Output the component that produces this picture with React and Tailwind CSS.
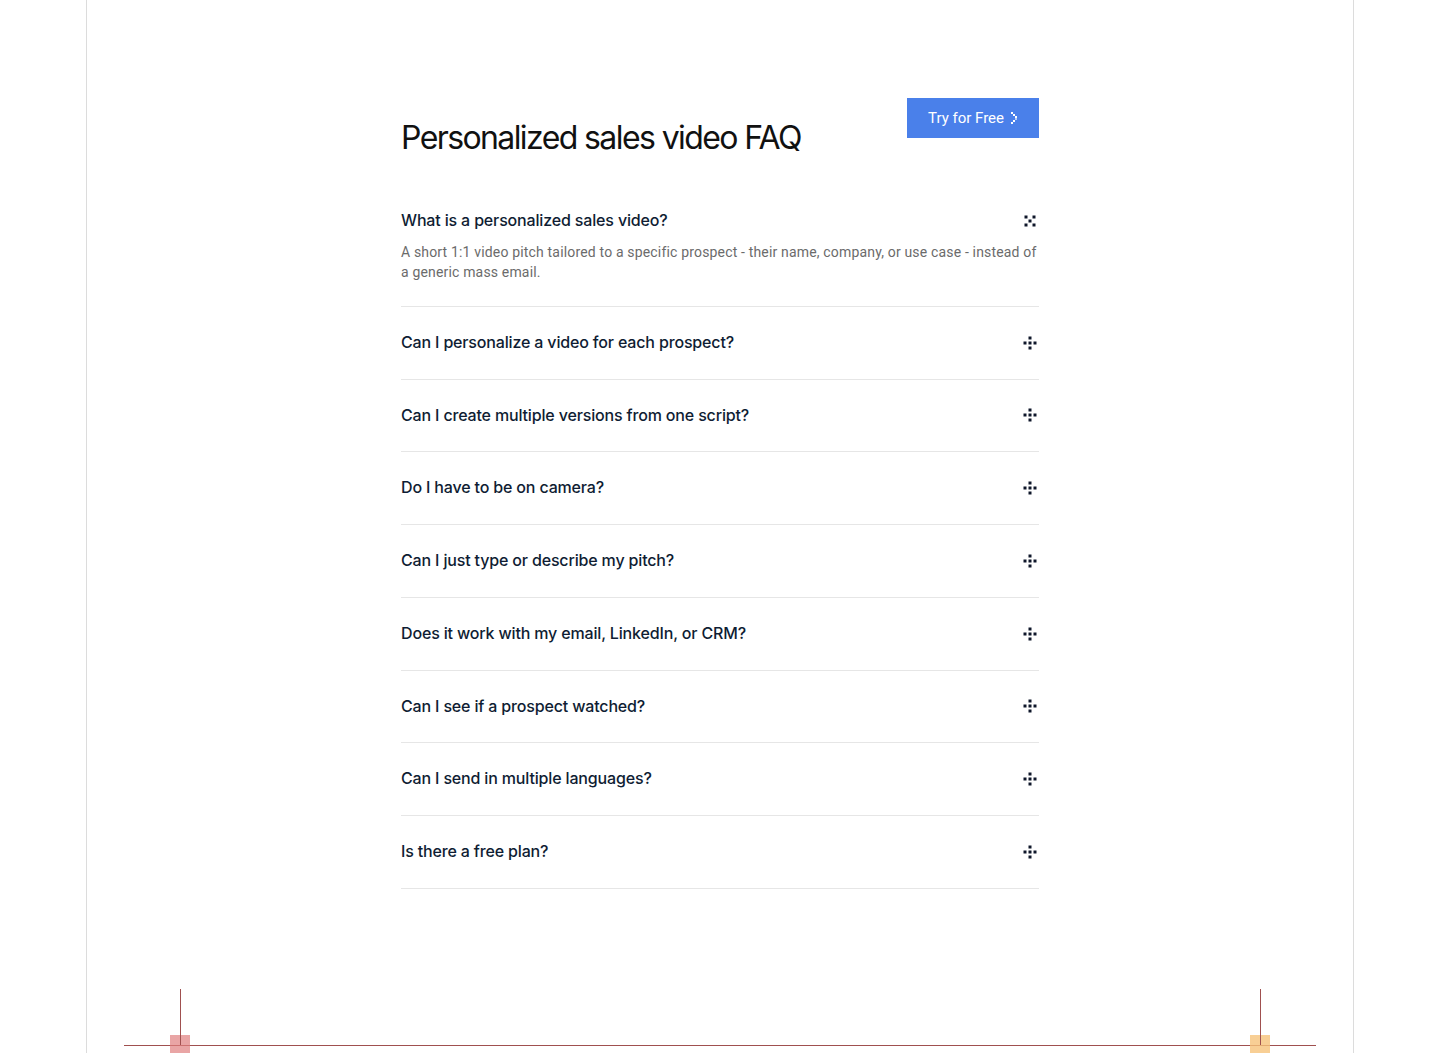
import { useState } from 'react';

const faqs = [
  {
    q: 'What is a personalized sales video?',
    a: 'A short 1:1 video pitch tailored to a specific prospect - their name, company, or use case - instead of a generic mass email.',
  },
  { q: 'Can I personalize a video for each prospect?', a: 'Yes. Swap in the name, company and details for every prospect and generate a unique video for each one.' },
  { q: 'Can I create multiple versions from one script?', a: 'Yes. Write one script and create as many variations as you need.' },
  { q: 'Do I have to be on camera?', a: 'No. You can use an AI avatar or a voiceover instead.' },
  { q: 'Can I just type or describe my pitch?', a: 'Yes. Describe your pitch and the video is generated for you.' },
  { q: 'Does it work with my email, LinkedIn, or CRM?', a: 'Yes. Share a link or embed the video wherever you reach your prospects.' },
  { q: 'Can I see if a prospect watched?', a: 'Yes. You can track views and engagement for every video.' },
  { q: 'Can I send in multiple languages?', a: 'Yes. Translate your video into many languages.' },
  { q: 'Is there a free plan?', a: 'Yes. You can try it for free.' },
];

function PlusDots() {
  return (
    <svg width="14" height="14" viewBox="0 0 14 14" className="text-[#0f172a]">
      <rect x="5.5" y="0.5" width="3" height="3" fill="currentColor" />
      <rect x="0.5" y="5.5" width="3" height="3" fill="currentColor" />
      <rect x="5.5" y="5.5" width="3" height="3" fill="currentColor" />
      <rect x="10.5" y="5.5" width="3" height="3" fill="currentColor" />
      <rect x="5.5" y="10.5" width="3" height="3" fill="currentColor" />
    </svg>
  );
}

function CrossDots() {
  return (
    <svg width="14" height="14" viewBox="0 0 14 14" className="text-[#0f172a]">
      <rect x="1.5" y="1.5" width="3" height="3" fill="currentColor" />
      <rect x="9.5" y="1.5" width="3" height="3" fill="currentColor" />
      <rect x="5.5" y="5.5" width="3" height="3" fill="currentColor" />
      <rect x="1.5" y="9.5" width="3" height="3" fill="currentColor" />
      <rect x="9.5" y="9.5" width="3" height="3" fill="currentColor" />
    </svg>
  );
}

function PixelChevron() {
  return (
    <svg width="7" height="12" viewBox="0 0 7 12">
      <rect x="0" y="0" width="2" height="2" fill="white" />
      <rect x="2" y="2" width="2" height="2" fill="white" />
      <rect x="4" y="4" width="2" height="2" fill="white" />
      <rect x="4" y="6" width="2" height="2" fill="white" opacity="0.6" />
      <rect x="2" y="8" width="2" height="2" fill="white" />
      <rect x="0" y="10" width="2" height="2" fill="white" />
    </svg>
  );
}

// decorative crosshair marker at the bottom of the frame
function Marker({ color }) {
  return (
    <div className="flex flex-col items-start w-5">
      <div className="ml-[10px] h-[46px] w-px bg-[#a0504f]" />
      <div className={`w-5 h-5 ${color}`}>
        <div className="ml-[10px] h-[10px] w-px bg-[#a0504f]" />
      </div>
    </div>
  );
}

export default function App() {
  const [open, setOpen] = useState(0);

  return (
    <div className="min-h-screen bg-white" style={{ fontFamily: 'Roboto, "Liberation Sans", sans-serif' }}>
      <div className="max-w-[1268px] mx-auto border-x border-[#dcdcdc]">
        <section className="pt-[98px]">
          <div className="w-[638px] mx-auto">
            <div className="flex justify-between items-start">
              <h2
                className="mt-5 text-[32px] leading-[40px] font-normal tracking-[-0.05em] text-[#111111]"
                style={{ fontFamily: 'Inter, "Liberation Sans", sans-serif' }}
              >
                Personalized sales video FAQ
              </h2>
              <button className="h-10 pl-[21px] pr-[21px] flex items-center gap-[7px] bg-[#4a80ea] text-white text-[15px]">
                Try for Free
                <PixelChevron />
              </button>
            </div>

            <div className="mt-[27px]">
              {faqs.map((item, i) => (
                <div key={item.q} className="border-b border-[#e6e6e6] py-6">
                  <button
                    onClick={() => setOpen(open === i ? -1 : i)}
                    className="w-full flex items-center justify-between text-left"
                  >
                    <span
                      className="text-base leading-[23.75px] font-medium tracking-[-0.01em] text-[#0f1d33]"
                      style={{ fontFamily: 'Inter, Roboto, sans-serif' }}
                    >
                      {item.q}
                    </span>
                    <span className="pr-[2px]">{open === i ? <CrossDots /> : <PlusDots />}</span>
                  </button>
                  {open === i && (
                    <p className="mt-[9px] text-sm leading-5 tracking-[0.012em] text-[#6b6b6b]">{item.a}</p>
                  )}
                </div>
              ))}
            </div>
          </div>
        </section>

        <div className="mt-[100px] h-[140px]">
          <div className="mx-[37px] flex justify-between px-[46px]">
            <Marker color="bg-[#e07f7f]/70" />
            <Marker color="bg-[#f6c37a]/80" />
          </div>
          <div className="-mt-[10px] mx-[37px] h-px bg-[#a0504f]" />
        </div>
      </div>
    </div>
  );
}
